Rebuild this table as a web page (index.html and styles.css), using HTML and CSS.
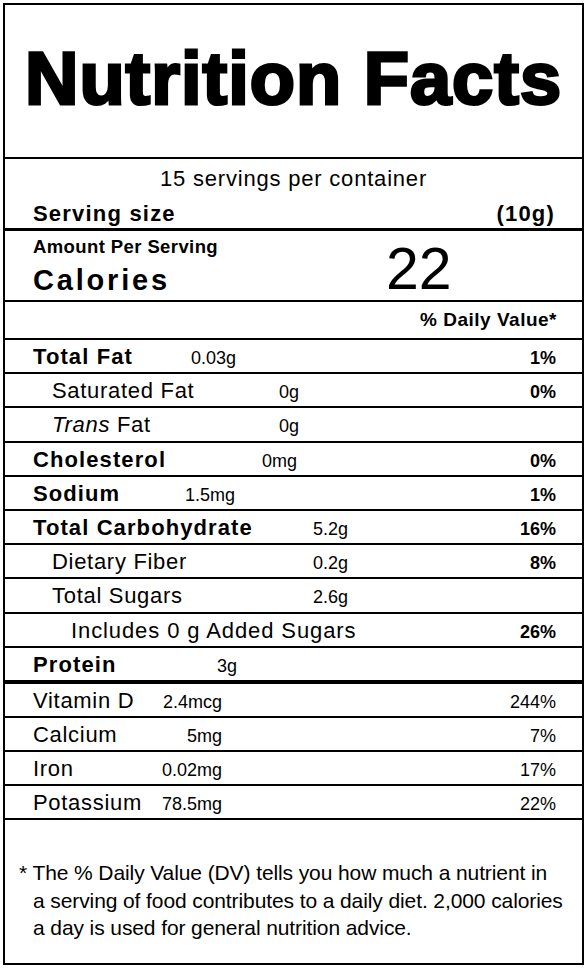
FILE: index.html
```html
<!DOCTYPE html>
<html lang="en">
<head>
<meta charset="utf-8">
<title>Nutrition Facts</title>
<link rel="stylesheet" href="styles.css">
</head>
<body>
<div class="label">
  <div class="title">Nutrition Facts</div>
  <div class="serving">
    <div class="servings">15 servings per container</div>
    <div class="size"><span>Serving size</span><span>(10g)</span></div>
  </div>
  <div class="calories">
    <div class="cal-left">
      <div class="amount-per">Amount Per Serving</div>
      <div class="cal-word">Calories</div>
    </div>
    <div class="cal-num">22</div>
  </div>
  <div class="dv">% Daily Value*</div>
  <div class="nutrients">
    <div class="row"><span class="name b w-fat">Total Fat</span><span class="amt">0.03g</span><span class="pct b">1%</span></div>
    <div class="row"><span class="name i1 w-sat">Saturated Fat</span><span class="amt">0g</span><span class="pct b">0%</span></div>
    <div class="row tall"><span class="name i1 w-sat"><em>Trans</em> Fat</span><span class="amt">0g</span></div>
    <div class="row"><span class="name b w-chol">Cholesterol</span><span class="amt">0mg</span><span class="pct b">0%</span></div>
    <div class="row"><span class="name b w-sod">Sodium</span><span class="amt">1.5mg</span><span class="pct b">1%</span></div>
    <div class="row"><span class="name b w-carb">Total Carbohydrate</span><span class="amt">5.2g</span><span class="pct b">16%</span></div>
    <div class="row"><span class="name i1 w-fib">Dietary Fiber</span><span class="amt">0.2g</span><span class="pct b">8%</span></div>
    <div class="row tall"><span class="name i1 w-fib">Total Sugars</span><span class="amt">2.6g</span></div>
    <div class="row"><span class="name i2 wide">Includes 0 g Added Sugars</span><span class="pct b">26%</span></div>
    <div class="row"><span class="name b w-pro">Protein</span><span class="amt">3g</span></div>
  </div>
  <div class="vitamins">
    <div class="row"><span class="name w-vit">Vitamin D</span><span class="amt vamt">2.4mcg</span><span class="pct">244%</span></div>
    <div class="row"><span class="name w-vit">Calcium</span><span class="amt vamt">5mg</span><span class="pct">7%</span></div>
    <div class="row"><span class="name w-vit">Iron</span><span class="amt vamt">0.02mg</span><span class="pct">17%</span></div>
    <div class="row"><span class="name w-vit">Potassium</span><span class="amt vamt">78.5mg</span><span class="pct">22%</span></div>
  </div>
  <div class="footnote">* The % Daily Value (DV) tells you how much a nutrient in<br>a serving of food contributes to a daily diet. 2,000 calories<br>a day is used for general nutrition advice.</div>
</div>
</body>
</html>
```
FILE: styles.css
```css
body {
  margin: 0;
  background: #fff;
  color: #000;
  font-family: "Liberation Sans", Arial, sans-serif;
}

.label {
  width: 577px;
  height: 958px;
  margin: 3px 0 0 3px;
  border: 2px solid #000;
  display: flex;
  flex-direction: column;
}

.title {
  height: 118px;
  padding-top: 34px;
  border-bottom: 2px solid #000;
  font-size: 74px;
  line-height: 80px;
  font-weight: 700;
  text-align: center;
  letter-spacing: 1px;
  -webkit-text-stroke: 3px #000;
  white-space: nowrap;
  flex: none;
}

.serving {
  height: 62px;
  padding-top: 7px;
  border-bottom: 3px solid #000;
  flex: none;
}

.servings {
  font-size: 22px;
  line-height: 26px;
  text-align: center;
  letter-spacing: 0.8px;
}

.size {
  display: flex;
  justify-content: space-between;
  margin-top: 9px;
  padding: 0 27px 0 28px;
  font-size: 22px;
  line-height: 26px;
  font-weight: 700;
  letter-spacing: 1.2px;
}

.calories {
  height: 60px;
  padding: 5px 0 4px 28px;
  border-bottom: 2px solid #000;
  display: flex;
  align-items: flex-end;
  flex: none;
}

.cal-left {
  width: 353px;
  flex: none;
}

.amount-per {
  font-size: 18.5px;
  line-height: 22px;
  font-weight: 700;
  letter-spacing: 0.4px;
}

.cal-word {
  margin-top: 6px;
  font-size: 29px;
  line-height: 32px;
  font-weight: 700;
  letter-spacing: 2.8px;
}

.cal-num {
  font-size: 59px;
  line-height: 53px;
}

.dv {
  height: 36px;
  border-bottom: 2px solid #000;
  padding-right: 25px;
  text-align: right;
  font-size: 19px;
  line-height: 36px;
  font-weight: 700;
  letter-spacing: 0.5px;
  flex: none;
}

.nutrients {
  border-bottom: 4px solid #000;
  flex: none;
}

.vitamins {
  border-bottom: 2px solid #000;
  flex: none;
}

.row {
  height: 32px;
  padding: 0 26px 0 28px;
  display: flex;
  align-items: baseline;
  white-space: nowrap;
}

.row.tall {
  height: 33px;
}

.row + .row {
  border-top: 2px solid #000;
}

.name {
  flex: none;
  font-size: 22px;
  line-height: 34px;
  letter-spacing: 0.7px;
}

.name.b {
  font-weight: 700;
  letter-spacing: 1.1px;
}

.name em {
  font-style: italic;
}

.i1 { margin-left: 19px; }
.i2 { margin-left: 38px; letter-spacing: 0.9px; }

.w-fat { width: 158px; }
.w-sat { width: 227px; }
.w-chol { width: 229px; }
.w-sod { width: 152px; }
.w-carb { width: 280px; }
.w-fib { width: 261px; }
.w-pro { width: 184px; }
.w-vit { width: 120px; }

.amt {
  font-size: 18px;
  line-height: 1;
}

.vamt {
  width: 69px;
  text-align: right;
}

.pct {
  margin-left: auto;
  font-size: 18px;
  line-height: 1;
}

.pct.b {
  font-size: 18px;
  font-weight: 700;
  letter-spacing: 0;
}

.footnote {
  flex: 1;
  padding: 39px 10px 0 28px;
  font-size: 21px;
  line-height: 27.5px;
  letter-spacing: -0.1px;
  text-indent: -14px;
  white-space: nowrap;
}
```
